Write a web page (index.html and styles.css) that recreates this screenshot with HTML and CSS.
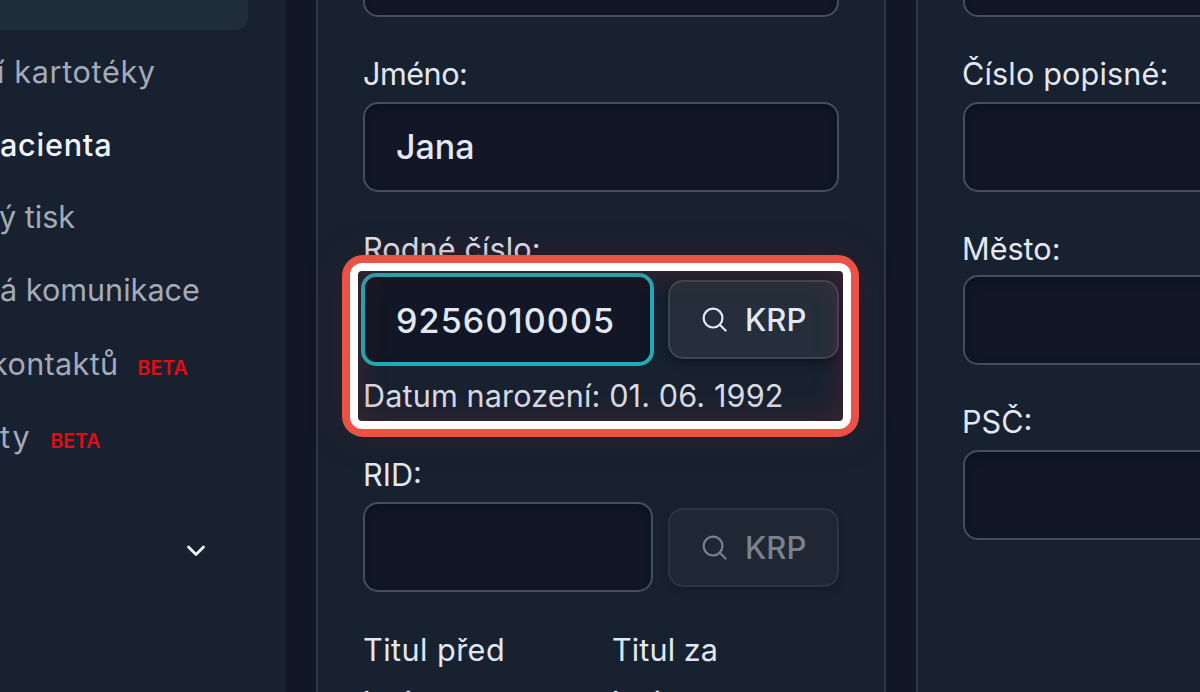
FILE: index.html
```
<!DOCTYPE html>
<html lang="cs">
<head>
<meta charset="utf-8">
<title>Karta pacienta</title>
<link rel="stylesheet" href="styles.css">
</head>
<body>
<div class="app">
  <nav class="sidebar">
    <div class="nav-active"></div>
    <div class="nav-item n1"><span class="text">í kartotéky</span></div>
    <div class="nav-item n2 current"><span class="text">acienta</span></div>
    <div class="nav-item n3"><span class="text">ý tisk</span></div>
    <div class="nav-item n4"><span class="text">á komunikace</span></div>
    <div class="nav-item n5"><span class="text">kontaktů</span><span class="beta">BETA</span></div>
    <div class="nav-item n6"><span class="text">ty</span><span class="beta">BETA</span></div>
    <div class="nav-toggle"><svg class="chevron" viewBox="0 0 20 12"><path d="M2.500 2l7.500 7.500L17.500 2"/></svg></div>
  </nav>
  <main class="content">
    <section class="card personal">
      <div class="input first"></div>
      <label class="label"><span class="t-jmeno">Jméno:</span></label>
      <div class="input"><span class="t-jana">Jana</span></div>
      <label class="label second"><span class="t-rodne">Rodné číslo:</span></label>
      <div class="row">
        <div class="input focused"><span class="t-number">9256010005</span></div>
        <button class="button raised"><svg class="search" viewBox="0 0 26 26"><circle cx="11.500" cy="11.500" r="9.800"/><path d="M18.500 18.500l6 6"/></svg><span>KRP</span></button>
        <div class="highlight"></div>
      </div>
      <div class="note"><span class="t-datum">Datum narození: 01. 06. 1992</span></div>
      <label class="label rid"><span class="t-rid">RID:</span></label>
      <div class="row">
        <div class="input"></div>
        <button class="button disabled"><svg class="search" viewBox="0 0 26 26"><circle cx="11.500" cy="11.500" r="9.800"/><path d="M18.500 18.500l6 6"/></svg><span>KRP</span></button>
      </div>
      <div class="titles">
        <div class="title-col"><span class="t-pred">Titul před</span><span class="t-sub">jménem:</span></div>
        <div class="title-col"><span class="t-za">Titul za</span><span class="t-sub">jménem:</span></div>
      </div>
    </section>
    <section class="card address">
      <div class="input first"></div>
      <label class="label"><span class="t-cislo">Číslo popisné:</span></label>
      <div class="input"></div>
      <label class="label second"><span class="t-mesto">Město:</span></label>
      <div class="input"></div>
      <label class="label third"><span class="t-psc">PSČ:</span></label>
      <div class="input"></div>
    </section>
  </main>
</div>
</body>
</html>
```
FILE: styles.css
```
* { box-sizing: border-box; }
body {
  margin: 0;
  background: #111726;
  color: #e3e8f4;
  font-family: Inter, "Noto Sans", sans-serif;
  font-size: 30.6px;
  line-height: 40px;
}
.app { display: flex; width: 1200px; height: 692px; overflow: hidden; }
.sidebar { flex: none; width: 286px; background: #182130; color: #a4aab7; }
.nav-active { width: 248px; height: 30px; background: #1f2d3b; border-radius: 0 0 13px 0; }
.nav-item { display: flex; align-items: baseline; height: 73px; white-space: nowrap; }
.n1 { padding-top: 22px; }
.n2 { padding-top: 22px; }
.n3 { padding-top: 21px; }
.n4 { padding-top: 21px; }
.n5 { padding-top: 22px; }
.n6 { padding-top: 22px; }
.n1 .text { margin-left: -3px; letter-spacing: .65px; }
.n2 .text { letter-spacing: .75px; }
.n3 .text { margin-left: -1px; }
.n5 .text { margin-left: -9px; letter-spacing: .35px; }
.n6 .text { letter-spacing: 1.8px; }
.current { color: #f0f4fc; font-weight: 500; }
.beta { margin-left: 19px; color: #e20d12; font-size: 19.500px; font-weight: 600; line-height: 20px; }
.nav-toggle { display: flex; padding: 77px 0 0 185.500px; }
.chevron { width: 20px; height: 12px; fill: none; stroke: #f2f5fc; stroke-width: 2.700; stroke-linecap: round; stroke-linejoin: round; }
.content { display: flex; gap: 30px; padding-left: 30px; }
.card {
  flex: none;
  width: 570px;
  height: 694px;
  padding: 0 45px;
  background: #182130;
  border: solid #2f3845;
  border-width: 0 2px;
  display: flex;
  flex-direction: column;
}
.input {
  flex: none;
  display: flex;
  align-items: center;
  width: 476px;
  height: 90px;
  padding-left: 31px;
  background: #111726;
  border: 2px solid #464e5b;
  border-radius: 15px;
  box-shadow: inset 0 4px 8px #0c131f;
  font-weight: 500;
  font-size: 34px;
}
.first { margin-top: -73px; }
.label { flex: none; height: 85px; padding-top: 37px; white-space: nowrap; }
.second { height: 83px; }
.third { height: 85px; }
.rid { height: 71px; padding-top: 24px; }
.row { position: relative; flex: none; display: flex; align-items: center; gap: 15px; width: 476px; height: 90px; }
.row .input { width: 290px; }
.row .focused { width: 293px; height: 93px; margin: -2px -1px -1px -2px; border: 4px solid #20acb6; padding-left: 31px; }
.t-number { padding-top: 2px; letter-spacing: 1.15px; }
.t-jmeno { letter-spacing: -.5px; }
.t-rodne { letter-spacing: .1px; }
.t-mesto { margin-left: -1px; }
.t-cislo { margin-left: -1px; letter-spacing: .15px; }
.t-psc { margin-left: -1px; }
.t-datum { letter-spacing: .13px; }
.t-pred { letter-spacing: .45px; }
.t-za { letter-spacing: .1px; }
.button {
  display: flex;
  align-items: center;
  gap: 18px;
  width: 171px;
  height: 79px;
  padding: 2px 0 0 32px;
  background: #252e3a;
  color: #e3e8f4;
  border: 2px solid #3d4551;
  border-radius: 15px;
  box-shadow: 0 4px 8px #0e1522;
  font: 500 31px/40px Inter, "Noto Sans", sans-serif;
}
.raised { margin-bottom: 2px; }
.search { width: 25px; height: 25px; margin-top: -1px; fill: none; stroke: currentColor; stroke-width: 2.300; stroke-linecap: round; }
.disabled { background: #1e2733; border-color: #2b343f; color: #7b818c; box-shadow: 0 3px 6px #151d2a; }
.highlight {
  position: absolute;
  left: -21px;
  top: -20px;
  width: 517px;
  height: 182px;
  border: 8px solid #e95245;
  border-radius: 21px;
  box-shadow: 0 0 32px rgba(80, 25, 28, .35);
}
.highlight::after {
  content: "";
  position: absolute;
  inset: 0;
  border: 8px solid #fff;
  border-radius: 12px;
}
.highlight::before {
  content: "";
  position: absolute;
  inset: 8px;
  border-radius: 4px;
  box-shadow: inset 0 0 30px rgba(170, 45, 45, .28);
}
.note { flex: none; height: 66px; padding-top: 11px; color: #d9dce5; white-space: nowrap; }
.titles { flex: none; display: flex; padding-top: 38px; }
.title-col { flex: none; display: flex; flex-direction: column; gap: 13px; width: 249px; white-space: nowrap; }
```
